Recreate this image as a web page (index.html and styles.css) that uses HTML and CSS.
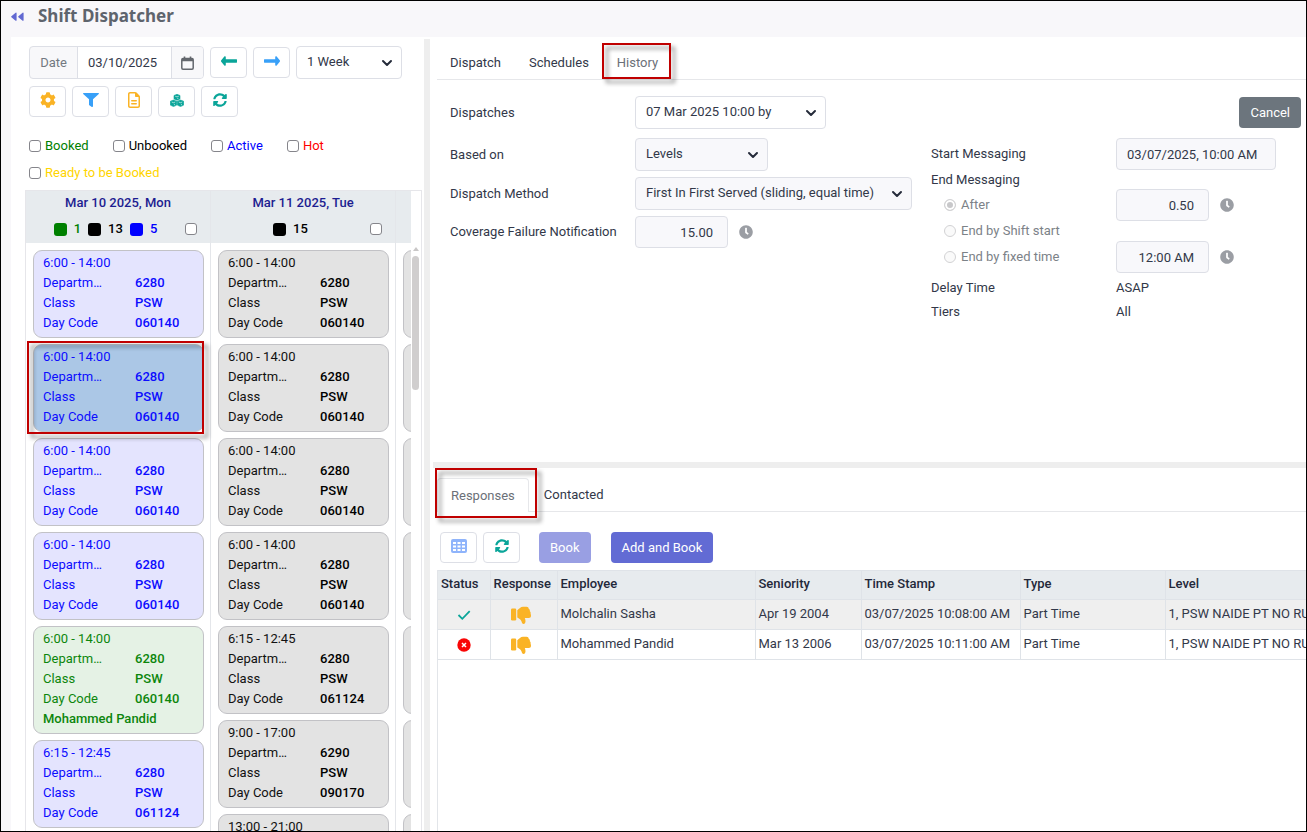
FILE: index.html
```html
<!DOCTYPE html>
<html lang="en">
<head>
<meta charset="utf-8">
<title>Shift Dispatcher</title>
<link rel="stylesheet" href="styles.css">
</head>
<body>
<svg class="sprite" aria-hidden="true">
  <symbol id="i-chevron" viewBox="0 0 12 12"><path d="M2 4l4 4 4-4" fill="none" stroke="#252b3a" stroke-width="2" stroke-linecap="round" stroke-linejoin="round"/></symbol>
  <symbol id="i-sync" viewBox="0 0 512 512"><path d="M370.72 133.28C339.458 104.008 298.888 87.962 255.848 88c-77.458.068-144.328 53.178-162.791 126.85-1.344 5.363-6.122 9.15-11.651 9.15H24.103c-7.498 0-13.194-6.807-11.807-14.176C33.933 94.924 134.813 8 256 8c66.448 0 126.791 26.136 171.315 68.685L463.03 40.97C478.149 25.851 504 36.559 504 57.941V192c0 13.255-10.745 24-24 24H345.941c-21.382 0-32.09-25.851-16.971-40.971l41.75-41.749zM32 296h134.059c21.382 0 32.09 25.851 16.971 40.971l-41.75 41.75c31.262 29.273 71.835 45.319 114.876 45.28 77.418-.07 144.315-53.144 162.787-126.849 1.344-5.363 6.122-9.15 11.651-9.15h57.304c7.498 0 13.194 6.807 11.807 14.176C478.067 417.076 377.187 504 256 504c-66.448 0-126.791-26.136-171.315-68.685L48.97 471.03C33.851 486.149 8 475.441 8 454.059V320c0-13.255 10.745-24 24-24z"/></symbol>
  <symbol id="i-clock" viewBox="0 0 512 512"><path d="M256,8C119,8,8,119,8,256S119,504,256,504,504,393,504,256,393,8,256,8Zm92.49,313h0l-20,25a16,16,0,0,1-22.49,2.5h0l-67-49.72a40,40,0,0,1-15-31.23V112a16,16,0,0,1,16-16h32a16,16,0,0,1,16,16V256l58,42.5A16,16,0,0,1,348.49,321Z"/></symbol>
  <symbol id="i-down" viewBox="0 0 20 18"><rect x="0" y="2.500" width="5.200" height="12" rx="1.200"/><path d="M6.300 4.200C8.300 3 9.600.8 12 .8h3.500c1.300 0 2.200.8 2.200 2 1 .5 1.400 1.500 1.100 2.400.8.6 1.100 1.600.8 2.500.3.600.4 1.200.4 2 0 1.300-.9 2.300-2.200 2.300h-4c.4 1 .7 2 .7 3.200 0 1.600-.8 2.700-1.900 2.700-1 0-1.500-.6-1.800-1.700-.5-2-1.300-3-4.500-4.800z"/></symbol>
</svg>
<div class="app">
  <header class="topbar">
    <button class="collapse" aria-label="Collapse menu"><svg width="13" height="10" viewBox="0 -1 13 10"><path d="M5 1.200v7L.8 4.700zM12 1.200v7L7.800 4.700z" fill="#6269d2" stroke="#6269d2" stroke-width="1.200" stroke-linejoin="round"/></svg></button>
    <h1>Shift Dispatcher</h1>
  </header>
  <main class="main">
    <section class="left">
      <div class="toolbar">
        <div class="date-group">
          <label for="date">Date</label>
          <input id="date" type="text" value="03/10/2025">
          <button aria-label="Open calendar"><svg width="13" height="14" viewBox="0 0 13 14"><path d="M3.500.5v2M9.500.5v2" stroke="#63676d" stroke-width="1.600"/><rect x=".8" y="2.500" width="11.400" height="10.700" rx="1.200" fill="none" stroke="#63676d" stroke-width="1.500"/><path d="M1 2.500h11v2.700H1z" fill="#63676d"/></svg></button>
        </div>
        <button class="icon-btn teal" aria-label="Previous"><svg width="16" height="10" viewBox="0 140 448 232" preserveAspectRatio="none"><path d="M134.059 296H436c6.627 0 12-5.373 12-12v-56c0-6.627-5.373-12-12-12H134.059v-46.059c0-21.382-25.851-32.090-40.971-16.971L7.029 239.029c-9.373 9.373-9.373 24.569 0 33.941l86.059 86.059c15.119 15.119 40.971 4.411 40.971-16.971V296z"/></svg></button>
        <button class="icon-btn blue" aria-label="Next"><svg width="16" height="10" viewBox="0 140 448 232" preserveAspectRatio="none"><path d="M313.941 216H12c-6.627 0-12 5.373-12 12v56c0 6.627 5.373 12 12 12h301.941v46.059c0 21.382 25.851 32.090 40.971 16.971l86.059-86.059c9.373-9.373 9.373-24.569 0-33.941l-86.059-86.059c-15.119-15.119-40.971-4.411-40.971 16.971V216z"/></svg></button>
        <div class="select w-week"><select aria-label="Range"><option>1 Week</option></select><svg class="chev"><use href="#i-chevron"/></svg></div>
      </div>
      <div class="toolbar second">
        <button class="icon-btn amber" aria-label="Settings"><svg width="16" height="16" viewBox="0 0 512 512"><path d="M487.400 315.700l-42.600-24.600c4.300-23.200 4.300-47 0-70.200l42.600-24.600c4.900-2.800 7.100-8.600 5.500-14-11.100-35.600-30-67.800-54.700-94.600-3.800-4.100-10-5.100-14.800-2.300L380.800 110c-17.900-15.400-38.500-27.300-60.800-35.100V25.800c0-5.600-3.900-10.500-9.400-11.700-36.700-8.200-74.300-7.800-109.200 0-5.500 1.200-9.400 6.100-9.400 11.700V75c-22.200 7.900-42.800 19.800-60.800 35.100L88.700 85.500c-4.900-2.800-11-1.900-14.800 2.300-24.700 26.700-43.600 58.900-54.700 94.600-1.700 5.400.6 11.200 5.500 14L67.300 221c-4.300 23.200-4.300 47 0 70.200l-42.600 24.600c-4.900 2.800-7.100 8.600-5.500 14 11.100 35.600 30 67.800 54.700 94.600 3.800 4.100 10 5.100 14.800 2.300l42.600-24.600c17.900 15.400 38.500 27.300 60.800 35.100v49.200c0 5.600 3.900 10.500 9.400 11.700 36.700 8.200 74.300 7.800 109.200 0 5.500-1.200 9.400-6.100 9.400-11.700v-49.200c22.200-7.900 42.800-19.800 60.800-35.100l42.600 24.600c4.900 2.800 11 1.900 14.800-2.300 24.700-26.700 43.600-58.900 54.700-94.600 1.500-5.500-.7-11.300-5.600-14.100zM256 336c-44.100 0-80-35.900-80-80s35.900-80 80-80 80 35.900 80 80-35.900 80-80 80z"/></svg></button>
        <button class="icon-btn blue" aria-label="Filter"><svg width="16" height="14" viewBox="0 0 512 512" preserveAspectRatio="none"><path d="M487.976 0H24.028C2.710 0-8.047 25.866 7.058 40.971L192 225.941V432c0 7.831 3.821 15.170 10.237 19.662l80 55.980C298.020 518.690 320 507.493 320 487.980V225.941l184.947-184.970C520.021 25.896 509.338 0 487.976 0z"/></svg></button>
        <button class="icon-btn amber" aria-label="Report"><svg width="12" height="16" viewBox="0 0 384 512"><path d="M64 464c-8.800 0-16-7.200-16-16V64c0-8.800 7.200-16 16-16H224v80c0 17.700 14.300 32 32 32h80V448c0 8.800-7.200 16-16 16H64zM64 0C28.700 0 0 28.700 0 64V448c0 35.300 28.700 64 64 64H320c35.300 0 64-28.700 64-64V154.500c0-17-6.700-33.300-18.700-45.300L274.700 18.700C262.700 6.700 246.500 0 229.500 0H64zm56 256c-13.300 0-24 10.700-24 24s10.700 24 24 24H264c13.300 0 24-10.700 24-24s-10.700-24-24-24H120zm0 96c-13.300 0-24 10.700-24 24s10.700 24 24 24H264c13.300 0 24-10.700 24-24s-10.700-24-24-24H120z"/></svg></button>
        <button class="icon-btn teal" aria-label="Groups"><svg width="14" height="13" viewBox="0 0 14 13"><path d="M7 .3l3 1.200v3.400L7 6.300 4 4.900V1.500zM3.500 6l3.200 1.300v3.800l-3.200 1.500L.3 11.100V7.300zM10.500 6l3.200 1.300v3.800l-3.200 1.500-3.200-1.500V7.300z" stroke="#0aa599" stroke-width=".6" stroke-linejoin="round"/><path d="M5.200 2.200L7 2.900l1.800-.7M1.700 8l1.800.7L5.300 8M8.700 8l1.800.7 1.800-.7M7.800 5V3.900M4.400 11.200V9.900M11.400 11.200V9.900" stroke="#fff" stroke-width=".6" fill="none"/></svg></button>
        <button class="icon-btn teal" aria-label="Refresh"><svg width="14" height="14"><use href="#i-sync"/></svg></button>
      </div>
      <div class="filters">
        <label class="c-green"><input type="checkbox">Booked</label>
        <label class="c-black"><input type="checkbox">Unbooked</label>
        <label class="c-blue"><input type="checkbox">Active</label>
        <label class="c-red"><input type="checkbox">Hot</label>
        <label class="c-gold"><input type="checkbox">Ready to be Booked</label>
      </div>
      <div class="board">
        <div class="columns">
          <div class="col">
            <div class="col-head">
              <div class="day">Mar 10 2025, Mon</div>
              <div class="counts"><span class="tally"><i class="sq g"></i><b class="c-green">1</b><i class="sq k"></i><b class="c-black">13</b><i class="sq b"></i><b class="c-blue">5</b></span><input type="checkbox" aria-label="Select Mar 10"></div>
            </div>
            <div class="cards">
              <article class="card blue-card"><p>6:00 - 14:00</p><dl><dt>Departm…</dt><dd>6280</dd><dt>Class</dt><dd>PSW</dd><dt>Day Code</dt><dd>060140</dd></dl></article>
              <article class="card blue-card picked"><p>6:00 - 14:00</p><dl><dt>Departm…</dt><dd>6280</dd><dt>Class</dt><dd>PSW</dd><dt>Day Code</dt><dd>060140</dd></dl><span class="mark mark-card"></span></article>
              <article class="card blue-card"><p>6:00 - 14:00</p><dl><dt>Departm…</dt><dd>6280</dd><dt>Class</dt><dd>PSW</dd><dt>Day Code</dt><dd>060140</dd></dl></article>
              <article class="card blue-card"><p>6:00 - 14:00</p><dl><dt>Departm…</dt><dd>6280</dd><dt>Class</dt><dd>PSW</dd><dt>Day Code</dt><dd>060140</dd></dl></article>
              <article class="card green-card"><p>6:00 - 14:00</p><dl><dt>Departm…</dt><dd>6280</dd><dt>Class</dt><dd>PSW</dd><dt>Day Code</dt><dd>060140</dd></dl><strong>Mohammed Pandid</strong></article>
              <article class="card blue-card"><p>6:15 - 12:45</p><dl><dt>Departm…</dt><dd>6280</dd><dt>Class</dt><dd>PSW</dd><dt>Day Code</dt><dd>061124</dd></dl></article>
            </div>
          </div>
          <div class="col">
            <div class="col-head">
              <div class="day">Mar 11 2025, Tue</div>
              <div class="counts"><span class="tally"><i class="sq k"></i><b class="c-black">15</b></span><input type="checkbox" aria-label="Select Mar 11"></div>
            </div>
            <div class="cards">
              <article class="card"><p>6:00 - 14:00</p><dl><dt>Departm…</dt><dd>6280</dd><dt>Class</dt><dd>PSW</dd><dt>Day Code</dt><dd>060140</dd></dl></article>
              <article class="card"><p>6:00 - 14:00</p><dl><dt>Departm…</dt><dd>6280</dd><dt>Class</dt><dd>PSW</dd><dt>Day Code</dt><dd>060140</dd></dl></article>
              <article class="card"><p>6:00 - 14:00</p><dl><dt>Departm…</dt><dd>6280</dd><dt>Class</dt><dd>PSW</dd><dt>Day Code</dt><dd>060140</dd></dl></article>
              <article class="card"><p>6:00 - 14:00</p><dl><dt>Departm…</dt><dd>6280</dd><dt>Class</dt><dd>PSW</dd><dt>Day Code</dt><dd>060140</dd></dl></article>
              <article class="card"><p>6:15 - 12:45</p><dl><dt>Departm…</dt><dd>6280</dd><dt>Class</dt><dd>PSW</dd><dt>Day Code</dt><dd>061124</dd></dl></article>
              <article class="card"><p>9:00 - 17:00</p><dl><dt>Departm…</dt><dd>6290</dd><dt>Class</dt><dd>PSW</dd><dt>Day Code</dt><dd>090170</dd></dl></article>
              <article class="card short"><p>13:00 - 21:00</p></article>
            </div>
          </div>
          <div class="col">
            <div class="col-head"></div>
            <div class="cards">
              <article class="card empty"></article><article class="card empty"></article><article class="card empty"></article><article class="card empty"></article><article class="card empty"></article><article class="card empty"></article><article class="card empty"></article>
            </div>
          </div>
        </div>
        <div class="scroller"><svg width="8" height="6" viewBox="0 0 8 6"><path d="M1 5l3-4 3 4z" fill="#c9c7c7"/></svg><div class="thumb"></div></div>
      </div>
    </section>
    <div class="splitter-v"></div>
    <section class="right">
      <div class="upper">
        <nav class="tabs">
          <button>Dispatch</button><button>Schedules</button><button class="on">History<span class="mark mark-history"></span></button>
        </nav>
        <div class="form">
          <div class="form-top">
            <label for="disp">Dispatches</label>
            <div class="select w-disp"><select id="disp"><option>07 Mar 2025 10:00 by</option></select><svg class="chev"><use href="#i-chevron"/></svg></div>
            <button class="btn cancel">Cancel</button>
          </div>
          <div class="form-body">
            <div class="form-left">
              <label for="based">Based on</label>
              <div class="select w-based ro"><select id="based"><option>Levels</option></select><svg class="chev"><use href="#i-chevron"/></svg></div>
              <label for="method">Dispatch Method</label>
              <div class="select w-method ro"><select id="method"><option>First In First Served (sliding, equal time)</option></select><svg class="chev"><use href="#i-chevron"/></svg></div>
              <label for="cover">Coverage Failure Notification</label>
              <div class="with-clock"><input class="field num" id="cover" value="15.00" readonly><svg class="clock"><use href="#i-clock"/></svg></div>
            </div>
            <div class="form-right">
              <label for="start">Start Messaging</label>
              <div><input class="field start" id="start" value="03/07/2025, 10:00 AM" readonly></div>
              <span class="wide">End Messaging</span>
              <label class="radio"><input type="radio" name="end" checked disabled>After</label>
              <div class="with-clock"><input class="field num" aria-label="After hours" value="0.50" readonly><svg class="clock"><use href="#i-clock"/></svg></div>
              <label class="radio wide"><input type="radio" name="end" disabled>End by Shift start</label>
              <label class="radio"><input type="radio" name="end" disabled>End by fixed time</label>
              <div class="with-clock"><input class="field num" aria-label="Fixed time" value="12:00 AM" readonly><svg class="clock"><use href="#i-clock"/></svg></div>
              <span>Delay Time</span><span>ASAP</span>
              <span>Tiers</span><span>All</span>
            </div>
          </div>
        </div>
      </div>
      <div class="splitter-h"></div>
      <div class="lower">
        <nav class="tabs boxed">
          <button class="on">Responses<span class="mark mark-resp"></span></button><button>Contacted</button>
        </nav>
        <div class="actions">
          <button class="icon-btn" aria-label="Grid"><svg width="16" height="14" viewBox="0 0 16 14"><rect width="16" height="14" rx="2" fill="#8fb4fb"/><path d="M2 3h3v2H2zM6.500 3h3v2h-3zM11 3h3v2h-3zM2 6.500h3v2H2zM6.500 6.500h3v2h-3zM11 6.500h3v2h-3zM2 10h3v2H2zM6.500 10h3v2h-3zM11 10h3v2h-3z" fill="#fff"/></svg></button>
          <button class="icon-btn teal" aria-label="Refresh"><svg width="14" height="14"><use href="#i-sync"/></svg></button>
          <button class="btn book" disabled>Book</button>
          <button class="btn primary">Add and Book</button>
        </div>
        <div class="grid">
          <table>
            <colgroup><col class="k1"><col class="k2"><col class="k3"><col class="k4"><col class="k5"><col class="k6"><col></colgroup>
            <thead><tr><th>Status</th><th>Response</th><th>Employee</th><th>Seniority</th><th>Time Stamp</th><th>Type</th><th>Level</th></tr></thead>
            <tbody>
              <tr class="alt"><td class="mid"><svg width="14" height="12" viewBox="0 0 14 12"><path d="M1.500 6l3.800 3.800L12.700 2.200" fill="none" stroke="#0aa599" stroke-width="1.800"/></svg></td><td class="mid thumb-cell"><svg class="down" width="20" height="18"><use href="#i-down"/></svg></td><td>Molchalin Sasha</td><td>Apr 19 2004</td><td>03/07/2025 10:08:00 AM</td><td>Part Time</td><td>1, PSW NAIDE PT NO RULES</td></tr>
              <tr><td class="mid"><svg width="14" height="14" viewBox="0 0 14 14"><circle cx="7" cy="7" r="6.700" fill="#f90606"/><path d="M5 5l4 4M9 5l-4 4" stroke="#fff" stroke-width="1.500"/></svg></td><td class="mid thumb-cell"><svg class="down" width="20" height="18"><use href="#i-down"/></svg></td><td>Mohammed Pandid</td><td>Mar 13 2006</td><td>03/07/2025 10:11:00 AM</td><td>Part Time</td><td>1, PSW NAIDE PT NO RULES</td></tr>
            </tbody>
          </table>
        </div>
      </div>
    </section>
  </main>
</div>
</body>
</html>
```

FILE: styles.css
```css
* { box-sizing: border-box; }
body { margin: 0; font: 13px/20px Roboto, "Liberation Sans", sans-serif; color: #323849; }
button, input, select { font: inherit; color: inherit; }
button { cursor: pointer; }
p, dl, dd, h1 { margin: 0; }
svg { display: block; }
.sprite { display: none; }

.app { height: 100vh; border: 1px solid #000; background: #f8f7fa; display: flex; flex-direction: column; overflow: hidden; }
.topbar { flex: none; height: 36px; display: flex; align-items: center; gap: 14px; padding: 0 0 6px 10px; }
.topbar h1 { font: 700 17px/24px "Noto Sans", sans-serif; color: #5e646d; }
.collapse { border: 0; background: none; padding: 0; }
.main { flex: 1; min-height: 0; display: flex; margin-left: 10px; background: #fff; }

.left { flex: none; width: 413px; display: flex; flex-direction: column; padding: 9px 2px 0 14px; }
.toolbar { display: flex; align-items: center; gap: 6px; padding-left: 4px; height: 33px; }
.second { margin-top: 6px; }
.date-group { display: flex; width: 175px; height: 33px; border: 1px solid #dddfe6; border-radius: 4px; overflow: hidden; background: #f8f8fa; }
.date-group label { width: 48px; line-height: 31px; text-align: center; color: #737981; border-right: 1px solid #dddfe6; }
.date-group input { flex: 1; min-width: 0; border: 0; padding: 0 10px; background: #fff; outline: 0; }
.date-group button { width: 32px; border: 0; border-left: 1px solid #dddfe6; background: #f8f8fa; padding: 0; display: grid; place-items: center; }
.icon-btn { width: 37px; height: 31px; border: 1px solid #dddfe6; border-radius: 4px; background: #fff; padding: 0 0 3px; display: grid; place-items: center; }
.teal { fill: #0aa599; }
.blue { fill: #38a0f8; }
.amber { fill: #fab325; }
.select { position: relative; height: 33px; }
.select select { appearance: none; width: 100%; height: 100%; border: 1px solid #dddfe6; border-radius: 4px; background: #fff; padding: 0 24px 2px 10px; outline: 0; }
.ro select { background: #f8f8fb; }
.chev { position: absolute; right: 9px; top: 11px; width: 12px; height: 12px; pointer-events: none; }
.w-week { width: 106px; }
.w-disp { width: 191px; }
.w-based { width: 133px; }
.w-method { width: 277px; }

.filters { display: flex; flex-wrap: wrap; gap: 7px 24px; padding: 18px 0 7px 4px; }
.filters label { display: flex; align-items: center; gap: 4px; }
input[type="checkbox"] { appearance: none; width: 12px; height: 12px; margin: 0; border: 1px solid #85858b; border-radius: 3px; background: #fff; }
.c-green { color: green; }
.c-black { color: #000; }
.c-blue { color: #00f; }
.c-red { color: red; }
.c-gold { color: #ffd500; }

.board { flex: 1; min-height: 0; display: flex; border: 1px solid #e6e6ea; border-bottom: 0; }
.columns { flex: 1; display: flex; overflow: hidden; }
.col { flex: none; width: 185px; border-right: 1px solid #e4e6ea; display: flex; flex-direction: column; }
.col-head { flex: none; height: 52px; background: #e7ebee; text-align: center; }
.day { font-weight: 500; color: #1d1d91; line-height: 24px; }
.counts { display: flex; align-items: center; height: 28px; padding-right: 13px; }
.tally { flex: 1; display: flex; align-items: center; justify-content: center; gap: 7px; }
.tally b { font-weight: 500; }
.sq { width: 13px; height: 13px; border-radius: 3px; }
.g { background: green; }
.k { background: #000; }
.b { background: #00f; }
.cards { display: flex; flex-direction: column; gap: 6px; padding: 7px 6px 0 7px; }
.card { position: relative; flex: none; border: 1px solid #c2c2c6; border-radius: 9px; background: #e3e3e3; padding: 2px 9px 4px; color: #111; }
.card dl { display: grid; grid-template-columns: 92px 1fr; }
.card dd, .card strong { font-weight: 500; color: #000; }
.card.blue-card, .blue-card dd { color: #0c0cff; }
.card.blue-card { background: #e4e4fe; }
.card.picked { background: #abc7e6; }
.card.green-card, .green-card dd, .card.green-card strong { color: #0c860c; }
.card.green-card { background: #e5f2e5; }
.short, .empty { height: 88px; }
.scroller { flex: none; width: 10px; padding: 55px 1px 0; }
.thumb { width: 7px; height: 134px; margin-top: 4px; border-radius: 4px; background: #d0cece; }

.mark { position: absolute; border: 2px solid #c00000; filter: drop-shadow(4px 4px 2px rgba(0, 0, 0, .45)); pointer-events: none; z-index: 2; }
.mark-card { inset: -4px -1px -3px -7px; }
.mark-history { inset: -3px 0 0 -2px; }
.mark-resp { inset: -11px -9px -6px -3px; }

.splitter-v { flex: none; width: 6px; margin-top: 2px; background: #eee; }
.right { flex: 1; min-width: 0; display: flex; flex-direction: column; padding-left: 7px; }
.upper { flex: none; height: 425px; padding-top: 9px; }
.tabs { display: flex; gap: 2px; height: 34px; border-bottom: 1px solid #e6e7ea; }
.tabs button { position: relative; border: 0; background: none; padding: 0 13px; }
.tabs .on { color: #6b7078; }
.form { padding: 16px 5px 0 13px; }
.form-top, .form-left { display: grid; grid-template-columns: 185px auto; align-items: center; }
.form-top { grid-template-columns: 185px 1fr auto; }
.form-body { display: flex; gap: 19px; margin-top: 9px; align-items: flex-start; }
.form-left { row-gap: 6px; width: 462px; }
.btn { height: 31px; border: 0; border-radius: 4px; color: #fff; padding: 0 11px; }
.cancel { background: #6c757d; }
.field { width: 93px; height: 32px; border: 1px solid #dddfe6; border-radius: 4px; background: #f8f8fb; padding: 0 14px 0 10px; outline: 0; }
.num { text-align: right; }
.start { width: 160px; }
.with-clock { display: flex; align-items: center; gap: 11px; }
.clock { width: 14px; height: 14px; fill: #9b9ea4; }
.form-right { display: grid; grid-template-columns: 185px auto; grid-template-rows: 32px 19px 32px 20px 32px 30px 18px; align-items: center; }
.wide { grid-column: 1 / -1; }
.radio { display: flex; align-items: center; gap: 5px; padding-left: 13px; color: #7c8288; }
.radio input { appearance: none; width: 12px; height: 12px; margin: 0; border: 1px solid #d2d2d4; border-radius: 50%; background: #fafafa; }
.radio input:checked { background: #c8c8ca; box-shadow: inset 0 0 0 2px #fff; }
.splitter-h { flex: none; height: 6px; margin-left: -4px; background: #eee; }
.lower { flex: 1; min-height: 0; display: flex; flex-direction: column; padding-top: 10px; }
.boxed .on { border: 1px solid #e6e7ea; border-bottom: 0; border-radius: 4px 4px 0 0; background: #fff; height: 34px; }
.actions { display: flex; align-items: center; gap: 6px; padding: 20px 0 7px 3px; }
.book { margin-left: 13px; background: #999fe3; }
.primary { margin-left: 14px; background: #626bd4; }
.grid { flex: 1; min-height: 0; overflow: hidden; border-left: 1px solid #e2e5e9; }
table { width: 100%; table-layout: fixed; border-collapse: collapse; }
th, td { height: 30px; padding: 0 0 2px 3px; text-align: left; font-weight: 400; white-space: nowrap; overflow: hidden; border: 1px solid #dfe3e8; border-width: 1px 1px 1px 0; }
th:last-child, td:last-child { border-right: 0; }
th { height: 29px; background: #e7ebee; font-weight: 500; color: #23283a; }
.alt { background: #efefef; }
.mid { padding: 0; }
.mid svg { margin: 0 auto; }
.thumb-cell { padding-right: 6px; }
.down { fill: #fab325; }
.k1 { width: 52px; }
.k2 { width: 67px; }
.k3 { width: 198px; }
.k4 { width: 106px; }
.k5 { width: 159px; }
.k6 { width: 145px; }
```
